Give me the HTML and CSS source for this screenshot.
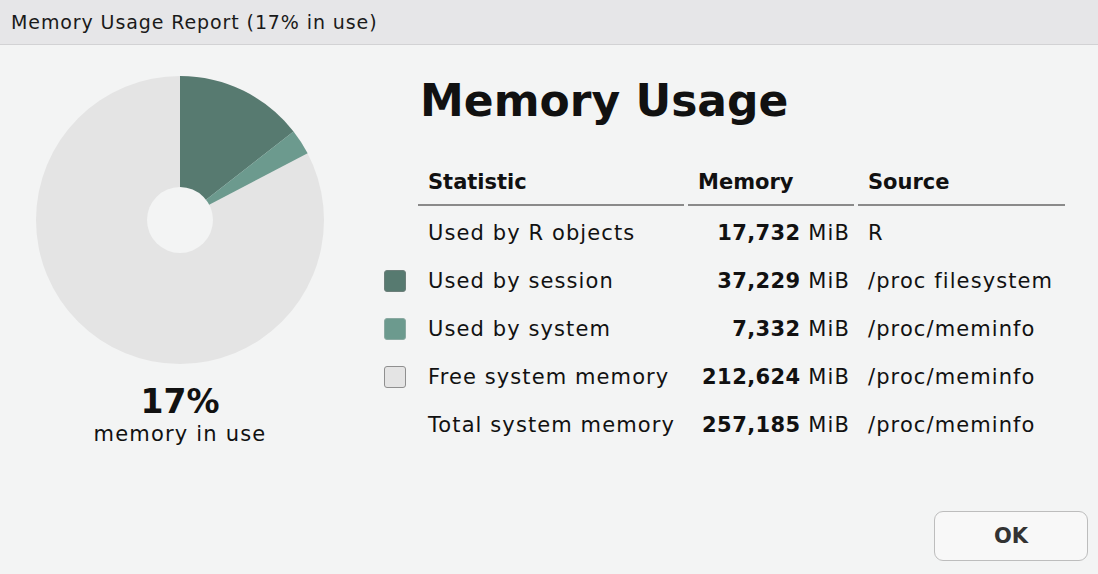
FILE: index.html
```html
<!DOCTYPE html>
<html lang="en">
<head>
    <meta charset="UTF-8">
    <title>Memory Usage Report</title>
    <link rel="stylesheet" href="styles.css">
</head>
<body>
    <div class="titlebar">Memory Usage Report (17% in use)</div>

    <div class="content">
        <div class="chart-pane">
            <!-- pie: session 14.5%, system 2.85%, free the rest -->
            <svg class="pie" width="290" height="290" viewBox="-145 -145 290 290">
                <circle cx="0" cy="0" r="144" fill="#e4e4e4"/>
                <path d="M0 0 L0 -144 A144 144 0 0 1 113.5 -88.6 Z" fill="#577a70"/>
                <path d="M0 0 L113.5 -88.6 A144 144 0 0 1 127.6 -66.8 Z" fill="#6c9a8e"/>
                <circle cx="0" cy="0" r="33" fill="#f3f4f4"/>
            </svg>
            <div class="pct">17%</div>
            <div class="pct-label">memory in use</div>
        </div>

        <div class="stats-pane">
            <h1>Memory Usage</h1>
            <table class="stats">
                <thead>
                    <tr>
                        <th class="swatch-col"></th>
                        <th class="stat-col">Statistic</th>
                        <th class="mem-col">Memory</th>
                        <th class="src-col">Source</th>
                    </tr>
                </thead>
                <tbody>
                    <tr>
                        <td></td>
                        <td>Used by R objects</td>
                        <td class="mem"><b>17,732</b> MiB</td>
                        <td>R</td>
                    </tr>
                    <tr>
                        <td><span class="swatch session"></span></td>
                        <td>Used by session</td>
                        <td class="mem"><b>37,229</b> MiB</td>
                        <td>/proc filesystem</td>
                    </tr>
                    <tr>
                        <td><span class="swatch system"></span></td>
                        <td>Used by system</td>
                        <td class="mem"><b>7,332</b> MiB</td>
                        <td>/proc/meminfo</td>
                    </tr>
                    <tr>
                        <td><span class="swatch free"></span></td>
                        <td>Free system memory</td>
                        <td class="mem"><b>212,624</b> MiB</td>
                        <td>/proc/meminfo</td>
                    </tr>
                    <tr>
                        <td></td>
                        <td>Total system memory</td>
                        <td class="mem"><b>257,185</b> MiB</td>
                        <td>/proc/meminfo</td>
                    </tr>
                </tbody>
            </table>
        </div>
    </div>

    <div class="footer">
        <button class="ok-btn">OK</button>
    </div>
</body>
</html>
```

FILE: styles.css
```css
html, body { margin: 0; height: 100%; }
body { font-family: "DejaVu Sans", sans-serif; background: #f3f4f4; color: #111; overflow: hidden; }

.titlebar { height: 44px; line-height: 44px; padding-left: 11px; font-size: 19px; letter-spacing: 0.9px; background: #e6e6e8; border-bottom: 1px solid #d2d2d4; color: #1a1a1a; }

.content { display: flex; }
.chart-pane { width: 360px; display: flex; flex-direction: column; align-items: center; padding-top: 30px; }
.pie { display: block; }
.pct { font-size: 33px; font-weight: bold; margin-top: 18px; line-height: 38px; }
.pct-label { font-size: 21px; line-height: 26px; letter-spacing: 1.2px; }

.stats-pane { padding-left: 20px; }
h1 { font-size: 44px; margin: 26px 0 0 40px; line-height: 60px; font-weight: bold; }

.stats { border-collapse: separate; border-spacing: 4px 0; margin: 33px 0 0 0; font-size: 21px; }
.stats th { text-align: left; font-weight: bold; padding: 0 8px 4px 10px; height: 36px; border-bottom: 2px solid #8a8a8a; }
.stats th.swatch-col { border-bottom: none; width: 22px; padding: 0 8px 0 0; }
.stats th.stat-col { width: 248px; }
.stats th.mem-col { width: 148px; }
.stats th.src-col { width: 189px; }
.stats td { padding: 0 4px 0 10px; height: 48px; white-space: nowrap; letter-spacing: 1.1px; }
.stats td:first-child { padding: 0 8px 0 0; }
.stats td.mem { text-align: right; padding-right: 4px; }
.stats td:last-child { padding-left: 10px; }
.stats td b { letter-spacing: 0.4px; }
.stats tbody tr:first-child td { padding-top: 3px; }

.swatch { display: block; width: 20px; height: 20px; border-radius: 3px; border: 1px solid #8f8f8f; }
.swatch.session { background: #577a70; border-color: #6c7f7a; }
.swatch.system { background: #6c9a8e; border-color: #8aa9a1; }
.swatch.free { background: #e4e4e4; }

.footer { position: absolute; right: 10px; bottom: 13px; }
.ok-btn { width: 154px; height: 50px; border: 1px solid #bdbdbd; border-radius: 9px; background: #f8f8f8; font-family: "DejaVu Sans", sans-serif; font-size: 21px; font-weight: bold; color: #333; }
```
